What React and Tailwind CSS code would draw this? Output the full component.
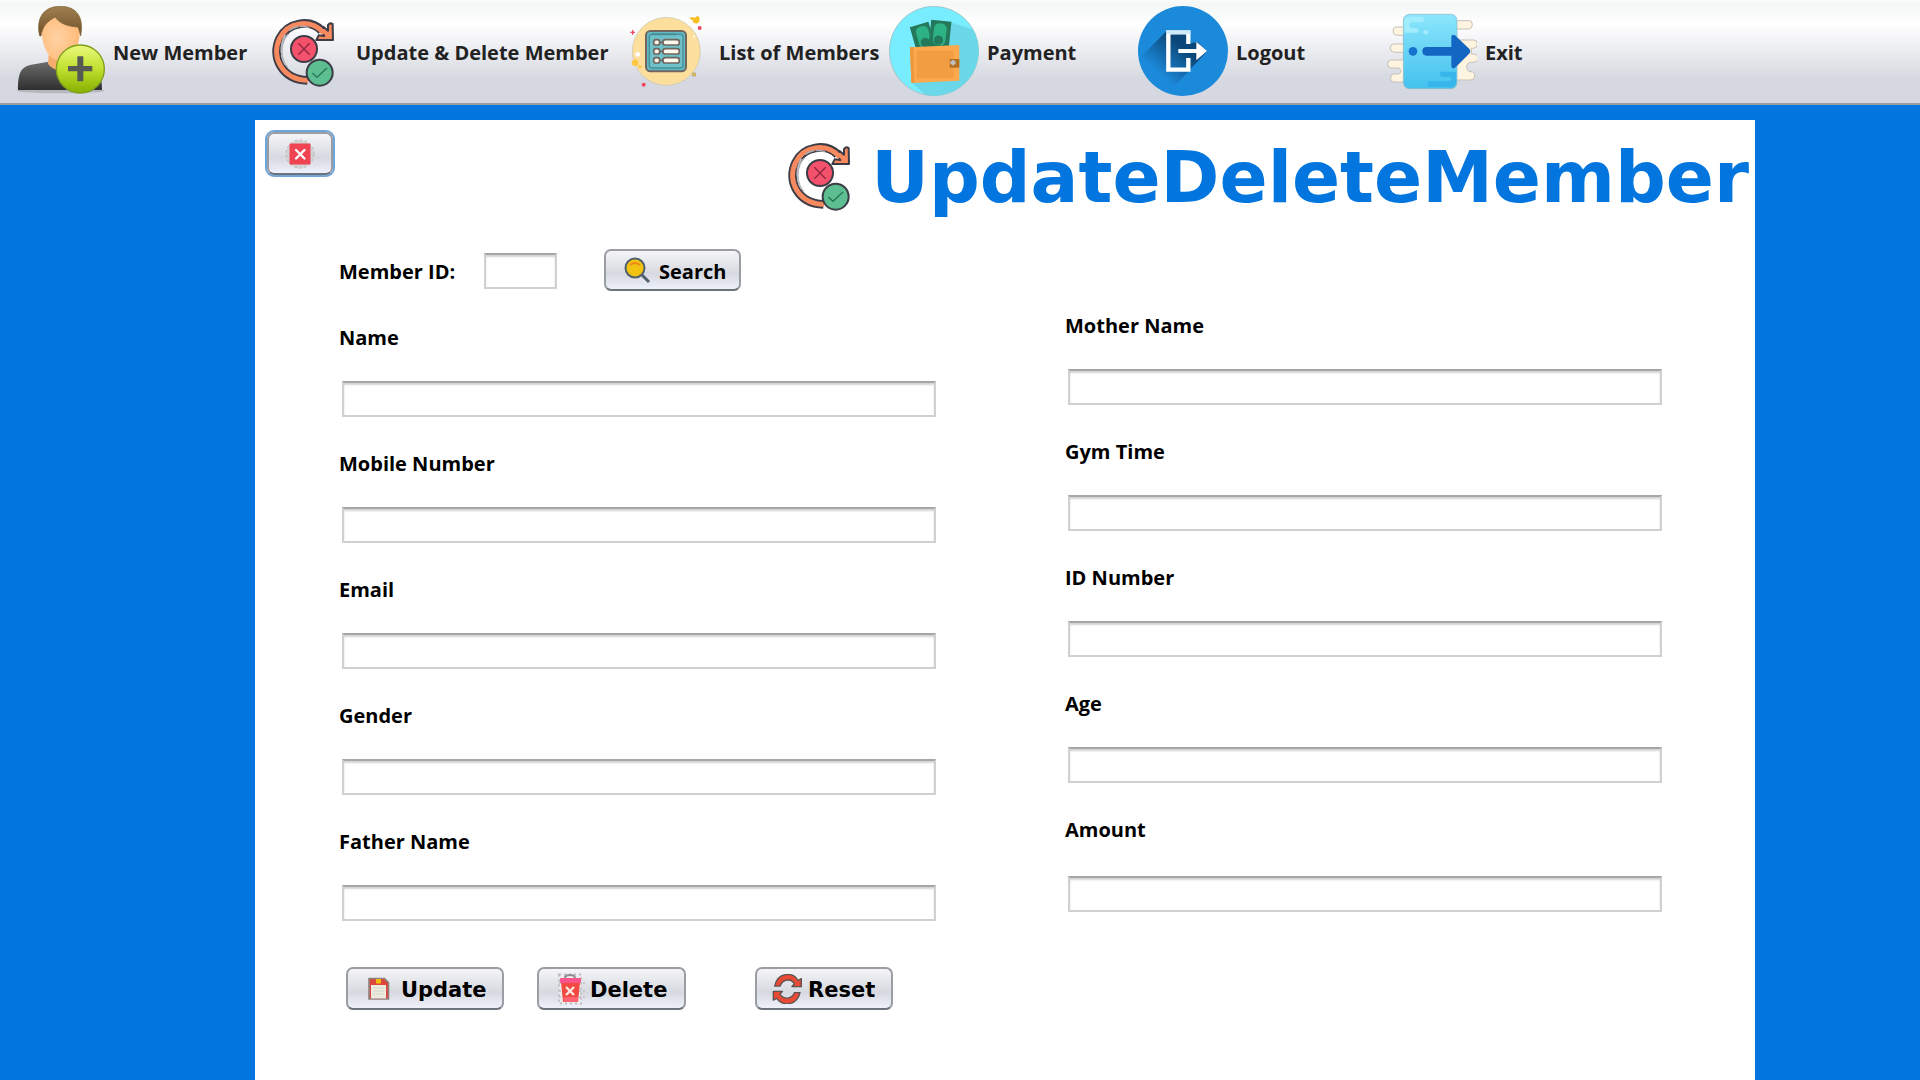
import React from "react";

function UserAddIcon() {
  return (
    <svg viewBox="45 18 270 270" className="size-[90px] shrink-0" aria-hidden="true">
      <defs>
        <linearGradient id="suit" x1="0" y1="0" x2="0" y2="1">
          <stop offset="0" stopColor="#6b6b6b" />
          <stop offset="1" stopColor="#2f2f2f" />
        </linearGradient>
        <linearGradient id="hair" x1="0" y1="0" x2="0" y2="1">
          <stop offset="0" stopColor="#a08050" />
          <stop offset="1" stopColor="#6e5128" />
        </linearGradient>
        <radialGradient id="skin" cx="0.4" cy="0.55" r="0.6">
          <stop offset="0" stopColor="#ffd2a3" />
          <stop offset="1" stopColor="#ffba78" />
        </radialGradient>
        <linearGradient id="lime" x1="0" y1="0" x2="0" y2="1">
          <stop offset="0" stopColor="#eaf97c" />
          <stop offset="0.5" stopColor="#bfe02e" />
          <stop offset="1" stopColor="#86b000" />
        </linearGradient>
      </defs>
      <ellipse cx="182" cy="272" rx="132" ry="8" fill="#8b8d92" opacity="0.45" />
      <path d="M54 270c0-50 8-70 40-76l52-9h70l50 12c32 7 40 28 40 73z" fill="url(#suit)" />
      <path d="M146 165h70v30c-8 20-50 26-72-4z" fill="#f5ad6c" />
      <path d="M124 80c0-30 20-45 56-45s60 15 60 50c0 60-24 96-60 96s-56-46-56-101z" fill="url(#skin)" />
      <path d="M119 108c-12-54 12-89 62-89 50 0 72 34 61 89-3-12-6-22-8-27-24 0-58-10-68-30-22 12-39 26-43 57z" fill="url(#hair)" stroke="#7c5f36" strokeWidth="2" />
      <circle cx="241" cy="207" r="72" fill="url(#lime)" stroke="#7f9f1c" strokeWidth="4" />
      <path d="M234 169h14q2 0 2 2v27h25q2 0 2 2v12q0 2-2 2h-25v28q0 2-2 2h-14q-2 0-2-2v-28h-26q-2 0-2-2v-12q0-2 2-2h26v-27q0-2 2-2z" fill="#555a52" />
    </svg>
  );
}

function UpdateDeleteIcon() {
  return (
    <svg viewBox="774 18 270 270" className="size-[90px] shrink-0" fill="none" aria-hidden="true">
      <path d="M965 92C930 55 862 68 839 115c-27 55 7 124 83 126" stroke="#3c3c46" strokeWidth="26" />
      <path d="M998 72q-8-5-14 3v17l-14-12-11 9 14 19-17-2-7 14h50z" fill="#f7895f" stroke="#3c3c46" strokeWidth="6" strokeLinejoin="round" />
      <path d="M972 100C931 52 862 68 839 115c-27 55 7 124 85 126" stroke="#f7895f" strokeWidth="15" />
      <path d="M865 102c-24 24-27 73-2 101" stroke="#a9aab0" strokeWidth="4" />
      <path d="M856 104c-16 28-16 66 0 90" stroke="#b9bac0" strokeWidth="5" strokeDasharray="55 8" />
      <path d="M868 91c20-14 43-15 60-7" stroke="#a9aab0" strokeWidth="5" strokeDasharray="28 6" />
      <circle cx="912" cy="147" r="39" fill="#f4516c" stroke="#3c3c46" strokeWidth="6" />
      <path d="M895 130l34 34M929 130l-34 34" stroke="#8f263e" strokeWidth="4" />
      <circle cx="959" cy="218" r="39" fill="#5dbe91" stroke="#3c3c46" strokeWidth="6" />
      <path d="M937 219l14 13 30-28" stroke="#287659" strokeWidth="4" />
    </svg>
  );
}

function ListIcon() {
  return (
    <svg viewBox="813 18 270 270" className="size-[90px] shrink-0" aria-hidden="true">
      <circle cx="949" cy="154" r="102" fill="#fddf9d" stroke="#c9c2b0" strokeWidth="2" />
      <rect x="888" y="93" width="120" height="121" rx="13" fill="#62b9c2" stroke="#70655f" strokeWidth="6" />
      <rect x="898" y="103" width="101" height="101" rx="8" fill="#6fc1c9" stroke="#478f98" strokeWidth="4" />
      <path d="M906 103h72" stroke="#47868f" strokeWidth="5" />
      {[127, 154, 181].map((y) => (
        <g key={y} stroke="#70655f" strokeWidth="5" fill="#fff8ec">
          <path d={`M930 ${y}h12`} />
          <rect x="911" y={y - 8} width="18" height="16" rx="7" />
          <rect x="939" y={y - 8} width="49" height="16" rx="7" />
        </g>
      ))}
      <path d="M1025 51l10 2 8-6 6 6-1 12-9 6-9-3-3-8-9-5z" fill="#f8bf23" />
      <circle cx="1049" cy="84" r="6" fill="#ef4862" />
      <path d="M848 90v14M841 97h14" stroke="#ef4862" strokeWidth="4" />
      <path d="M855 177l10 7-1 10-9 5-9-5-1-10z" fill="#ffc63f" />
      <circle cx="870" cy="200" r="5" fill="#ffc63f" />
      <circle cx="863" cy="163" r="7" fill="#fff" />
      <circle cx="1032" cy="110" r="4" fill="#fff5d8" />
      <circle cx="881" cy="254" r="6" fill="#ef4862" />
      <rect x="1027" y="218" width="10" height="11" fill="#b89c50" />
      <rect x="1030" y="221" width="4" height="5" fill="#ffd94a" />
    </svg>
  );
}

function PaymentIcon() {
  return (
    <svg viewBox="567 18 270 270" className="size-[90px] shrink-0" aria-hidden="true">
      <clipPath id="payClip"><circle cx="702" cy="153" r="134" /></clipPath>
      <circle cx="702" cy="153" r="134" fill="#77edff" stroke="#9db5bb" strokeWidth="2" />
      <path clipPath="url(#payClip)" d="M750 67l90 28v200H690l-55-47z" fill="#6bd8e9" />
      <g transform="rotate(-16 660 108)">
        <rect x="638" y="74" width="58" height="90" fill="#25795b" />
        <rect x="651" y="81" width="38" height="66" rx="16" fill="#2cb284" />
        <circle cx="670" cy="131" r="14" fill="#25795b" />
      </g>
      <g transform="rotate(6 720 105)">
        <rect x="689" y="62" width="61" height="88" fill="#25795b" />
        <rect x="700" y="70" width="38" height="66" rx="16" fill="#2cb284" />
        <circle cx="717" cy="121" r="14" fill="#25795b" />
      </g>
      <path d="M630 142l148-7v107l-144 7z" fill="#fca94e" />
      <path d="M630 142l10-1 3 108h-9z" fill="#ef973c" />
      <path d="M650 152h111v83H650z" fill="#f39d43" />
      <path d="M749 177h29v26h-29z" fill="#b56f22" />
      <path d="M759 180v16M751 188h16" stroke="#bfc0bd" strokeWidth="8" />
    </svg>
  );
}

function LogoutIcon() {
  return (
    <svg viewBox="114 18 270 270" className="size-[90px] shrink-0" aria-hidden="true">
      <defs>
        <linearGradient id="logoutShade" gradientUnits="userSpaceOnUse" x1="240" y1="135" x2="170" y2="215">
          <stop offset="0" stopColor="#0b4779" />
          <stop offset="1" stopColor="#1c8adb" />
        </linearGradient>
      </defs>
      <circle cx="249" cy="153" r="135" fill="#1c8adb" />
      <path d="M199 94l-74 74c20 50 50 84 94 96l102-110-28-28-21 4-4-30z" fill="url(#logoutShade)" />
      <path d="M265 132V97h-60v112h60v-35" fill="none" stroke="#fff" strokeWidth="13" />
      <path d="M199 92h73v10h-73z" fill="#aeddf7" opacity="0.6" />
      <path d="M235 147h54v-22l32 28-32 28v-22h-54z" fill="#fff" />
    </svg>
  );
}

function ExitIcon() {
  return (
    <svg viewBox="861 18 270 270" className="size-[90px] shrink-0" aria-hidden="true">
      <defs>
        <linearGradient id="doorFill" x1="0" y1="0" x2="0" y2="1">
          <stop offset="0" stopColor="#8ce6fc" />
          <stop offset="1" stopColor="#43c1ee" />
        </linearGradient>
      </defs>
      <path
        d="M1060 62h48q9 0 9 12t-10 13h-38v33h52q11 0 11 12t-12 13h-6v17h10q10 0 10 12t-12 13h-8q-14 0-14 14t14 14h-1q11 0 11 13 0 12-12 12h-60zM915 81h-26q-10 0-10 12t12 13h20v26h-30q-10 0-10 12t12 13h28v23h-37q-11 0-11 12t12 12h20q8 2 8 9t-8 9h-14q-9 0-9 11 0 13 12 13h34z"
        fill="#fff4df" stroke="#c4c1ba" strokeWidth="3"
      />
      <rect x="910" y="43" width="161" height="223" rx="18" fill="url(#doorFill)" stroke="#8fb7c5" strokeWidth="2" />
      <path d="M913 98h35q8 0 8-6t-7-7h-12q-9 0-9-9t10-9h25q9 0 9-8t-9-9h-35q-15 0-15 15z" fill="#a1edfd" />
      <circle cx="977" cy="97" r="7" fill="#a1edfd" />
      <path d="M1068 215h-41q-8 0-8 6t8 10h20q8 0 8 6t-8 7h-57q-8 0-8 7t8 10h61q17 0 17-17z" fill="#36b6ea" />
      <circle cx="939" cy="154" r="13" fill="#1673ce" />
      <path d="M980 141h74v-29q0-12 11-6l44 42q5 6 0 12l-42 42q-12 8-13-4v-31h-74q-13 0-13-13t13-13z" fill="#1466c3" />
    </svg>
  );
}

function CloseIcon() {
  return (
    <svg viewBox="0 0 30 30" className="size-[30px]" aria-hidden="true">
      <circle cx="15" cy="15" r="13.5" fill="#d3d1d2" />
      <circle cx="15" cy="15" r="14" fill="none" stroke="#b8b6b6" strokeDasharray="3 2" />
      <rect x="4.500" y="4.500" width="21" height="21" rx="1" fill="#f04452" />
      <path d="M11 11l8.500 8.500M19.500 11L11 19.500" stroke="#fff" strokeWidth="2.4" strokeLinecap="round" />
    </svg>
  );
}

function SearchIcon() {
  return (
    <svg viewBox="0 0 28 28" className="size-7" aria-hidden="true">
      <path d="M18 18l8 8" stroke="#4e5f6e" strokeWidth="3" />
      <circle cx="12" cy="12" r="9.5" fill="#f2c311" stroke="#52606b" strokeWidth="2" />
      <path d="M7 9q5-4 10 0" fill="none" stroke="#ee8a1b" strokeWidth="2" />
    </svg>
  );
}

function SaveIcon() {
  return (
    <svg viewBox="0 0 30 30" className="size-[30px]" aria-hidden="true">
      <path d="M6 4.500h15.500l4 4V25H6z" fill="#dd463c" stroke="#8f8280" strokeWidth="1.6" />
      <path d="M13 5h5v4.500h-5z" fill="#f2b90f" />
      <path d="M8 11h15v13.500H8z" fill="#ece9dd" />
      <path d="M10 14h11M10 17h11M10 20h11" stroke="#d5d8ca" />
    </svg>
  );
}

function TrashIcon() {
  return (
    <svg viewBox="0 0 30 32" className="h-8 w-[30px]" aria-hidden="true">
      <rect x="3" y="1.500" width="22" height="29" fill="#ececee" stroke="#bdbdbf" strokeWidth="2" strokeDasharray="2 3" />
      <path d="M3 10h26M3 18h26M3 24h26" stroke="#c7c7c9" strokeWidth="2" strokeDasharray="2 2" />
      <path d="M9 5q0-3 5-3t5 3" fill="none" stroke="#8d8d90" strokeWidth="2" />
      <path d="M5 9h19l-2 20H7z" fill="#f24a40" />
      <path d="M7 24h15v5H8z" fill="#ff6470" />
      <rect x="4" y="5" width="21" height="5" rx="1" fill="#f9558c" />
      <path d="M10 14l8 8M18 14l-8 8" stroke="#ffe9e6" strokeWidth="2.4" />
    </svg>
  );
}

function ResetIcon() {
  return (
    <svg viewBox="96 69 92 92" className="size-[30px]" aria-hidden="true">
      <g fill="#e94a36" stroke="#5b5351" strokeWidth="4" strokeLinejoin="round">
        <path d="M104 106c9-42 55-46 72-17l10-6v25h-29l8-9c-13-19-37-13-44 7z" />
        <path d="M182 126c-9 40-53 44-72 18l-10 5v-27h28l-8 9c14 19 38 14 45-5z" />
      </g>
    </svg>
  );
}

const menuItems = [
  { label: "New Member", Icon: UserAddIcon, width: "w-[243px]" },
  { label: "Update & Delete Member", Icon: UpdateDeleteIcon, width: "w-[363px]" },
  { label: "List of Members", Icon: ListIcon, width: "w-[268px]" },
  { label: "Payment", Icon: PaymentIcon, width: "w-[249px]" },
  { label: "Logout", Icon: LogoutIcon, width: "w-[249px]" },
  { label: "Exit", Icon: ExitIcon, width: "w-[249px]" },
];

const inputClass =
  "h-9 border-2 border-[#d0d0d0] border-t-[#a6a6a6] bg-white px-2 text-xl text-black shadow-[inset_0_2px_2px_#d4d4d4] outline-none";

const buttonClass =
  "flex items-center rounded-[7px] border-2 border-[#9a9da3] border-b-[#6e737b] bg-linear-to-b from-[#f5f5f7] via-[#d6d9e0] via-60% to-[#eef1fa] text-black";

function Field({ id, label, inputMargin = "mt-[31px]" }) {
  return (
    <div className="flex flex-col pt-px">
      <label htmlFor={id} className="text-xl leading-6 font-bold">{label}</label>
      <input id={id} type="text" className={`${inputClass} ${inputMargin} ml-[3px]`} />
    </div>
  );
}

export default function App() {
  return (
    <div className="flex min-h-screen flex-col bg-[#0276de] font-['Open_Sans','Noto_Sans',sans-serif] text-black">
      <nav className="flex h-[105px] items-start border-b-2 border-[#9a9ca3] bg-[linear-gradient(to_bottom,#f9fbfa_0px,#f4f7f5_4px,#ffffff_24px,#d5d8e0_80px,#d5d8e0_103px)] pt-1.5 pl-[15px]">
        {menuItems.map(({ label, Icon, width }) => (
          <button key={label} type="button" className={`flex shrink-0 items-center gap-2 text-left text-xl font-bold whitespace-nowrap text-[#222222] ${width}`}>
            <Icon />
            <span className="pt-[3px]">{label}</span>
          </button>
        ))}
      </nav>

      <div className="grid flex-1 grid-cols-[17fr_100fr_11fr] pt-[15px]">
        <main className="col-start-2 bg-white">
          <header className="flex items-start justify-between pt-2.5 pr-1.5 pl-3">
            <button type="button" aria-label="Close" className={`${buttonClass} mt-0.5 h-[43px] w-[66px] justify-center ring-2 ring-[#70a5d9]`}>
              <CloseIcon />
            </button>
            <div className="flex items-center gap-[7px]">
              <UpdateDeleteIcon />
              <h1 className="pt-1.5 font-['DejaVu_Sans',Verdana,sans-serif] text-[71px] leading-[82px] font-bold text-[#0276de]">UpdateDeleteMember</h1>
            </div>
          </header>

          <form className="mt-[29px] pr-[93px] pb-10 pl-[84px]" onSubmit={(e) => e.preventDefault()}>
            <div className="grid grid-cols-2 gap-x-[129px]">
              <div className="flex flex-col gap-[34px]">
                <div className="flex h-[42px] items-center">
                  <label htmlFor="member-id" className="w-[145px] pt-1 text-xl leading-6 font-bold">Member ID:</label>
                  <div className="pt-0.5">
                    <input id="member-id" type="text" className={`${inputClass} block w-[73px]`} />
                  </div>
                  <button type="submit" className={`${buttonClass} ml-[47px] h-[42px] w-[137px] gap-2 pl-[17px] text-xl font-bold`}>
                    <SearchIcon />
                    <span className="pt-[3px]">Search</span>
                  </button>
                </div>
                <Field id="name" label="Name" />
                <Field id="mobile" label="Mobile Number" />
                <Field id="email" label="Email" />
                <Field id="gender" label="Gender" />
                <Field id="father" label="Father Name" />
              </div>
              <div className="flex flex-col gap-[34px] pt-16">
                <Field id="mother" label="Mother Name" />
                <Field id="gym-time" label="Gym Time" />
                <Field id="id-number" label="ID Number" />
                <Field id="age" label="Age" />
                <Field id="amount" label="Amount" inputMargin="mt-[34px]" />
              </div>
            </div>
            <div className="mt-[46px] ml-[7px] flex font-['DejaVu_Sans',Verdana,sans-serif] text-[21px] font-bold">
              <button type="button" className={`${buttonClass} h-[43px] w-[158px] gap-2 pl-[15px]`}>
                <SaveIcon />
                <span className="pt-1">Update</span>
              </button>
              <button type="button" className={`${buttonClass} ml-[33px] h-[43px] w-[149px] gap-1 pl-[17px]`}>
                <TrashIcon />
                <span className="pt-1">Delete</span>
              </button>
              <button type="reset" className={`${buttonClass} ml-[69px] h-[43px] w-[138px] gap-1.5 pl-[15px]`}>
                <ResetIcon />
                <span className="pt-1">Reset</span>
              </button>
            </div>
          </form>
        </main>
      </div>
    </div>
  );
}
